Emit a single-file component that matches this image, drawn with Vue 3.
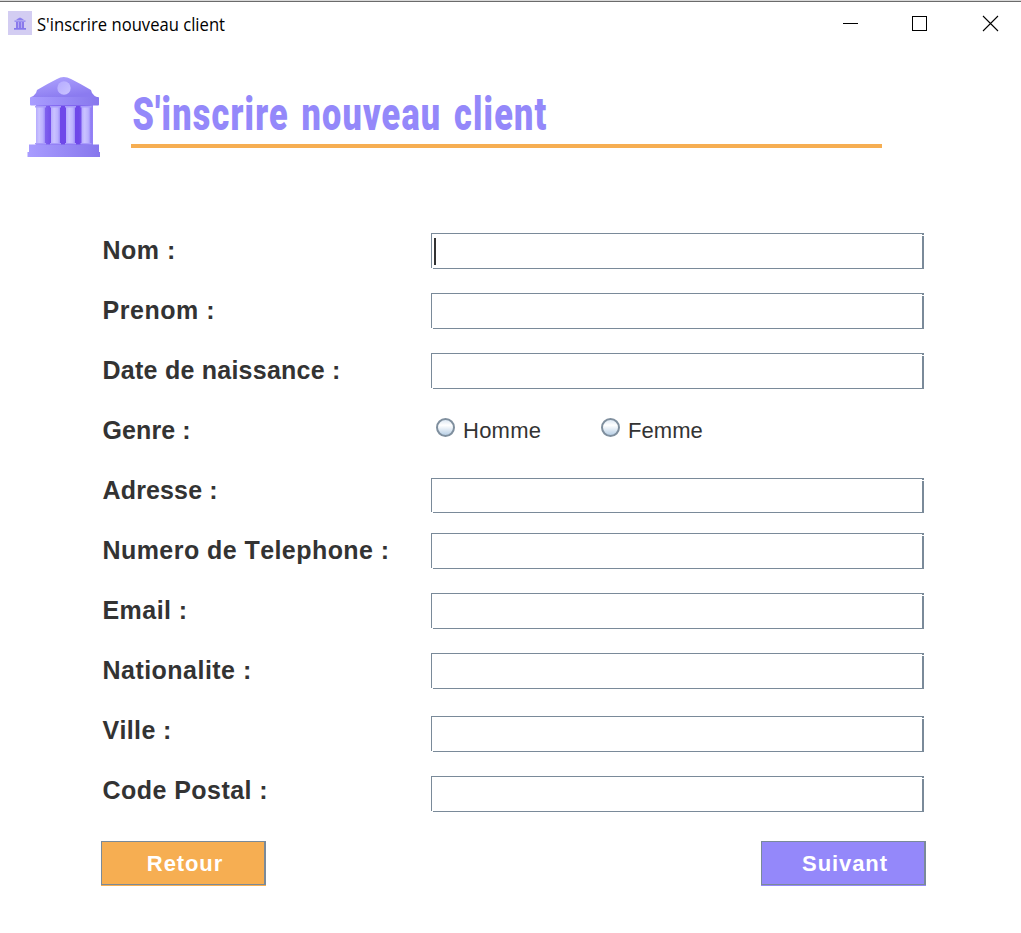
<script setup>
const rows = [
  { label: 'Nom :', spacing: 0.5, focused: true },
  { label: 'Prenom :', spacing: 0.55 },
  { label: 'Date de naissance :', spacing: 0.25 },
  { label: 'Genre :', spacing: 0.1, options: [{ text: 'Homme', spacing: 0.25 }, { text: 'Femme', spacing: 0.05 }] },
  { label: 'Adresse :', spacing: 0.15, drop: 'far' },
  { label: 'Numero de Telephone :', spacing: 0.44 },
  { label: 'Email :', spacing: 0.45 },
  { label: 'Nationalite :', spacing: 0.47 },
  { label: 'Ville :', spacing: 0.35, drop: 'near' },
  { label: 'Code Postal :', spacing: 0.45, drop: 'near' },
]
const columns = [36, 51, 66, 81.5]
</script>

<template>
  <div class="window">
    <header class="titlebar">
      <svg class="app-icon" width="24" height="24" viewBox="0 0 24 24">
        <rect width="24" height="24" fill="#d3cdf2" />
        <path d="M6.5 9.5h11v1.3h-11zM8 9l2-1.5 2-1 2 1 2 1.500z" fill="#8d80ef" />
        <path d="M8 11h8v6H8z" fill="#b6abf4" />
        <path d="M9 11v6M12 11v6M15 11v6" stroke="#7561e6" stroke-width="1.3" />
        <path d="M6 17h12v1.700H6z" fill="#8578ee" />
      </svg>
      <svg class="caption" width="300" height="36">
        <text x="0" y="24" textLength="188" lengthAdjust="spacingAndGlyphs">S'inscrire nouveau client</text>
      </svg>
      <svg class="controls" width="180" height="30" fill="none" stroke="#000" shape-rendering="crispEdges">
        <path d="M2 15.500h15" />
        <path d="M71.500 8.500h14v14h-14z" />
        <path d="M142 8l15 15M157 8l-15 15" shape-rendering="auto" stroke-width="1.1" />
      </svg>
    </header>

    <section class="banner">
      <svg class="bank" width="76" height="84" viewBox="26 75 76 84">
        <defs>
          <linearGradient id="roof" x1="0" y1="0" x2="0.5" y2="1">
            <stop offset="0" stop-color="#b1a6ff" /><stop offset="1" stop-color="#8b7bf0" />
          </linearGradient>
          <linearGradient id="column">
            <stop offset="0" stop-color="#b6abff" /><stop offset="0.35" stop-color="#cac3ff" />
            <stop offset="0.75" stop-color="#bbb1ff" /><stop offset="1" stop-color="#9d8df8" />
          </linearGradient>
          <linearGradient id="inside">
            <stop offset="0" stop-color="#9180f4" /><stop offset="0.3" stop-color="#6f48e9" />
            <stop offset="0.75" stop-color="#6f48e9" /><stop offset="1" stop-color="#9584f6" />
          </linearGradient>
          <linearGradient id="slab">
            <stop offset="0" stop-color="#a99dff" /><stop offset="1" stop-color="#8777ed" />
          </linearGradient>
          <linearGradient id="seal" x1="0" y1="0" x2="1" y2="1">
            <stop offset="0" stop-color="#b5abff" /><stop offset="1" stop-color="#cac4ff" />
          </linearGradient>
        </defs>
        <path d="M36 104h57v41H36z" fill="url(#inside)" />
        <path d="M31 97q3-1 5-4l1-3q10-6 20-11 6.500-4 14 0 10 5 20 11l1 3q2 3 5 4z" fill="url(#roof)" />
        <rect x="30" y="97" width="69" height="8.500" rx="1" fill="url(#slab)" />
        <circle cx="64" cy="88" r="6.700" fill="url(#seal)" />
        <rect v-for="x in columns" :key="x" :x="x" y="106" width="9" height="38" fill="url(#column)" />
        <path v-for="x in columns" :key="'c' + x" :d="`M${x - 1} 106h11v1.5h-11zM${x - 1} 143h11v1.500h-11z`" fill="#a99cfb" />
        <path d="M29 144.500h70v7.500h1v5H27.500v-5H29z" fill="url(#slab)" />
      </svg>
      <div class="heading">
        <svg width="800" height="56">
          <text x="0.500" y="42" textLength="415" lengthAdjust="spacingAndGlyphs">S'inscrire nouveau client</text>
        </svg>
        <div class="rule"></div>
      </div>
    </section>

    <main class="form">
      <div v-for="row in rows" :key="row.label" class="row">
        <div class="label" :style="{ letterSpacing: row.spacing + 'px' }">{{ row.label }}</div>
        <div v-if="row.options" class="options">
          <div v-for="option in row.options" :key="option.text" class="option">
            <i class="radio"></i>
            <span :style="{ letterSpacing: option.spacing + 'px' }">{{ option.text }}</span>
          </div>
        </div>
        <div v-else class="field" :class="row.drop"><i v-if="row.focused" class="caret"></i></div>
      </div>
    </main>

    <footer class="actions">
      <div class="button back">Retour</div>
      <div class="button next">Suivant</div>
    </footer>
  </div>
</template>

<style>
body { margin: 0; background: #fff; }
</style>

<style scoped>
.window {
  box-sizing: border-box;
  width: 1021px;
  height: 933px;
  overflow: hidden;
  background: #fff;
  border-top: 1px solid #d9d9d9;
  box-shadow: inset 0 1px #6b6b6b;
  color: #333;
  font-family: "Liberation Sans", Arial, sans-serif;
  font-kerning: none;
}
svg { display: block; flex: none; }
.titlebar { display: flex; height: 46px; padding: 0 0 0 8px; }
.app-icon { margin-top: 10px; }
.caption { margin: 6px 0 0 5px; }
.caption text { font: 17.5px "Open Sans", "Noto Sans", sans-serif; fill: #000; }
.controls { margin: 7px 0 0 504px; }
.banner { display: flex; height: 172px; }
.bank { margin: 28px 0 0 26px; }
.heading { margin: 41px 0 0 29px; padding: 0; }
.heading svg { margin-left: 1px; }
.heading text { font: 900 46px Roboto, sans-serif; letter-spacing: 1.6px; word-spacing: 4px; fill: #9488fa; }
.rule { width: 751px; height: 4px; margin-left: 0.400px; background: #f6ae52; }
.form { padding: 1px 0 0 102px; }
.row { display: grid; grid-template-columns: 329px 493px; height: 60px; }
.label { padding-left: 0.5px; font-size: 25px; font-weight: 700; line-height: 60px; white-space: nowrap; }
.field {
  position: relative;
  box-sizing: border-box;
  height: 36px;
  margin-top: 13px;
  border: 1px solid #7a8a99;
  border-right-width: 2px;
}
.field::before, .field::after {
  content: "";
  position: absolute;
  width: 2px;
  height: 1px;
  background: #fff;
}
.field::before { left: -1px; bottom: -1px; }
.field::after { right: -2px; top: 1px; }
.far { height: 35px; margin-top: 18px; }
.near { margin-top: 16px; }
.caret { display: block; width: 2px; height: 27px; margin: 4px 0 0 2px; background: #333; }
.options { display: flex; padding-left: 5px; }
.option { display: flex; width: 165px; font-size: 22px; line-height: 62px; }
.radio {
  box-sizing: border-box;
  width: 19px;
  height: 19px;
  margin: 18px 8px 0 0;
  border: 2px solid #7f8f9e;
  border-radius: 50%;
  background: linear-gradient(#dde8f3, #fff 35%, #b8cfe5);
}
.actions { display: flex; justify-content: space-between; width: 825px; margin: 21px 0 0 101px; }
.button {
  box-sizing: border-box;
  width: 165px;
  height: 44px;
  border: 1px solid #7a8a99;
  border-right-width: 2px;
  color: #fff;
  font-size: 22px;
  font-weight: 700;
  line-height: 43px;
  letter-spacing: 0.9px;
  text-align: center;
  padding-left: 4px;
}
.back { background: #f6ae52; box-shadow: 0 1px #f6ae52; }
.next { background: #9488fa; box-shadow: 0 1px #9488fa; }
</style>
